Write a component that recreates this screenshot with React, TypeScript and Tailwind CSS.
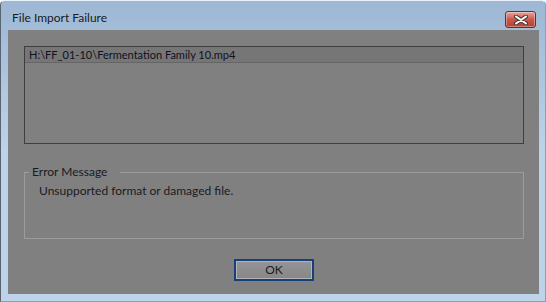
import React from 'react'

const font = { fontFamily: 'Lato, "Noto Sans", Arial, sans-serif' }

function CloseButton() {
    return (
        <div className="mt-[10px] mr-[9px] w-[31px] h-[17px] rounded-[3px] border border-[#6b2a2a] bg-gradient-to-b from-[#e6a59a] via-[#c9584a] to-[#b8402f] flex items-center justify-center shadow-[inset_0_0_0_1px_rgba(255,255,255,0.35)]">
            <svg width="14" height="10" viewBox="0 0 14 10">
                <path d="M2 1.5 L12 8.5 M12 1.5 L2 8.5" stroke="#4a3a3a" strokeWidth="4" strokeLinecap="round" />
                <path d="M2 1.5 L12 8.5 M12 1.5 L2 8.5" stroke="#ffffff" strokeWidth="2" strokeLinecap="round" />
            </svg>
        </div>
    )
}

export default function App() {
    return (
        <div className="w-[546px] h-[302px] bg-[#bcd3ea] bg-gradient-to-b from-[#9db7d4] via-[#bcd3ea] to-[#bcd3ea] border-l border-l-[#5a6470] border-t border-t-[#e8f0f8] border-r border-r-[#2ec6e6] border-b border-b-[#2ec6e6] rounded-tl-[5px] rounded-tr-[5px] flex flex-col" style={font}>
            <div className="h-[29px] flex items-start justify-between">
                <span className="pl-[11px] pt-[9px] text-[12px] leading-[16px] text-[#1a1a1a]">File Import Failure</span>
                <CloseButton />
            </div>
            <div className="ml-[7px] mr-[6px] h-[264px] bg-[#808080] flex flex-col pl-[16px] pr-[15px] pt-[16px]">
                <div className="h-[98px] border border-[#3e3e3e]">
                    <div className="h-[16px] bg-[#767676] border-b border-[#666666] pl-[4px] text-[11px] leading-[15px] text-[#111122]">
                        H:\FF_01-10\Fermentation Family 10.mp4
                    </div>
                </div>
                <fieldset className="mt-[20px] h-[75px] border border-[#9c9c9c] pl-0 pr-0 pb-0">
                    <legend className="ml-[4px] pl-[3px] pr-[13px] text-[12px] leading-[16px] text-[#1a1a22]">Error Message</legend>
                    <p className="pl-[14px] pt-[3px] text-[12px] leading-[16px] text-[#1a1a22]">Unsupported format or damaged file.</p>
                </fieldset>
                <div className="flex justify-center mt-[20px]">
                    <button className="w-[80px] h-[22px] border-2 border-[#173f7a] bg-gradient-to-b from-[#959595] to-[#868686] text-[12px] leading-[16px] text-[#1a1a22] shadow-[inset_0_0_0_1px_#b4b4b4]">
                        OK
                    </button>
                </div>
            </div>
        </div>
    )
}
